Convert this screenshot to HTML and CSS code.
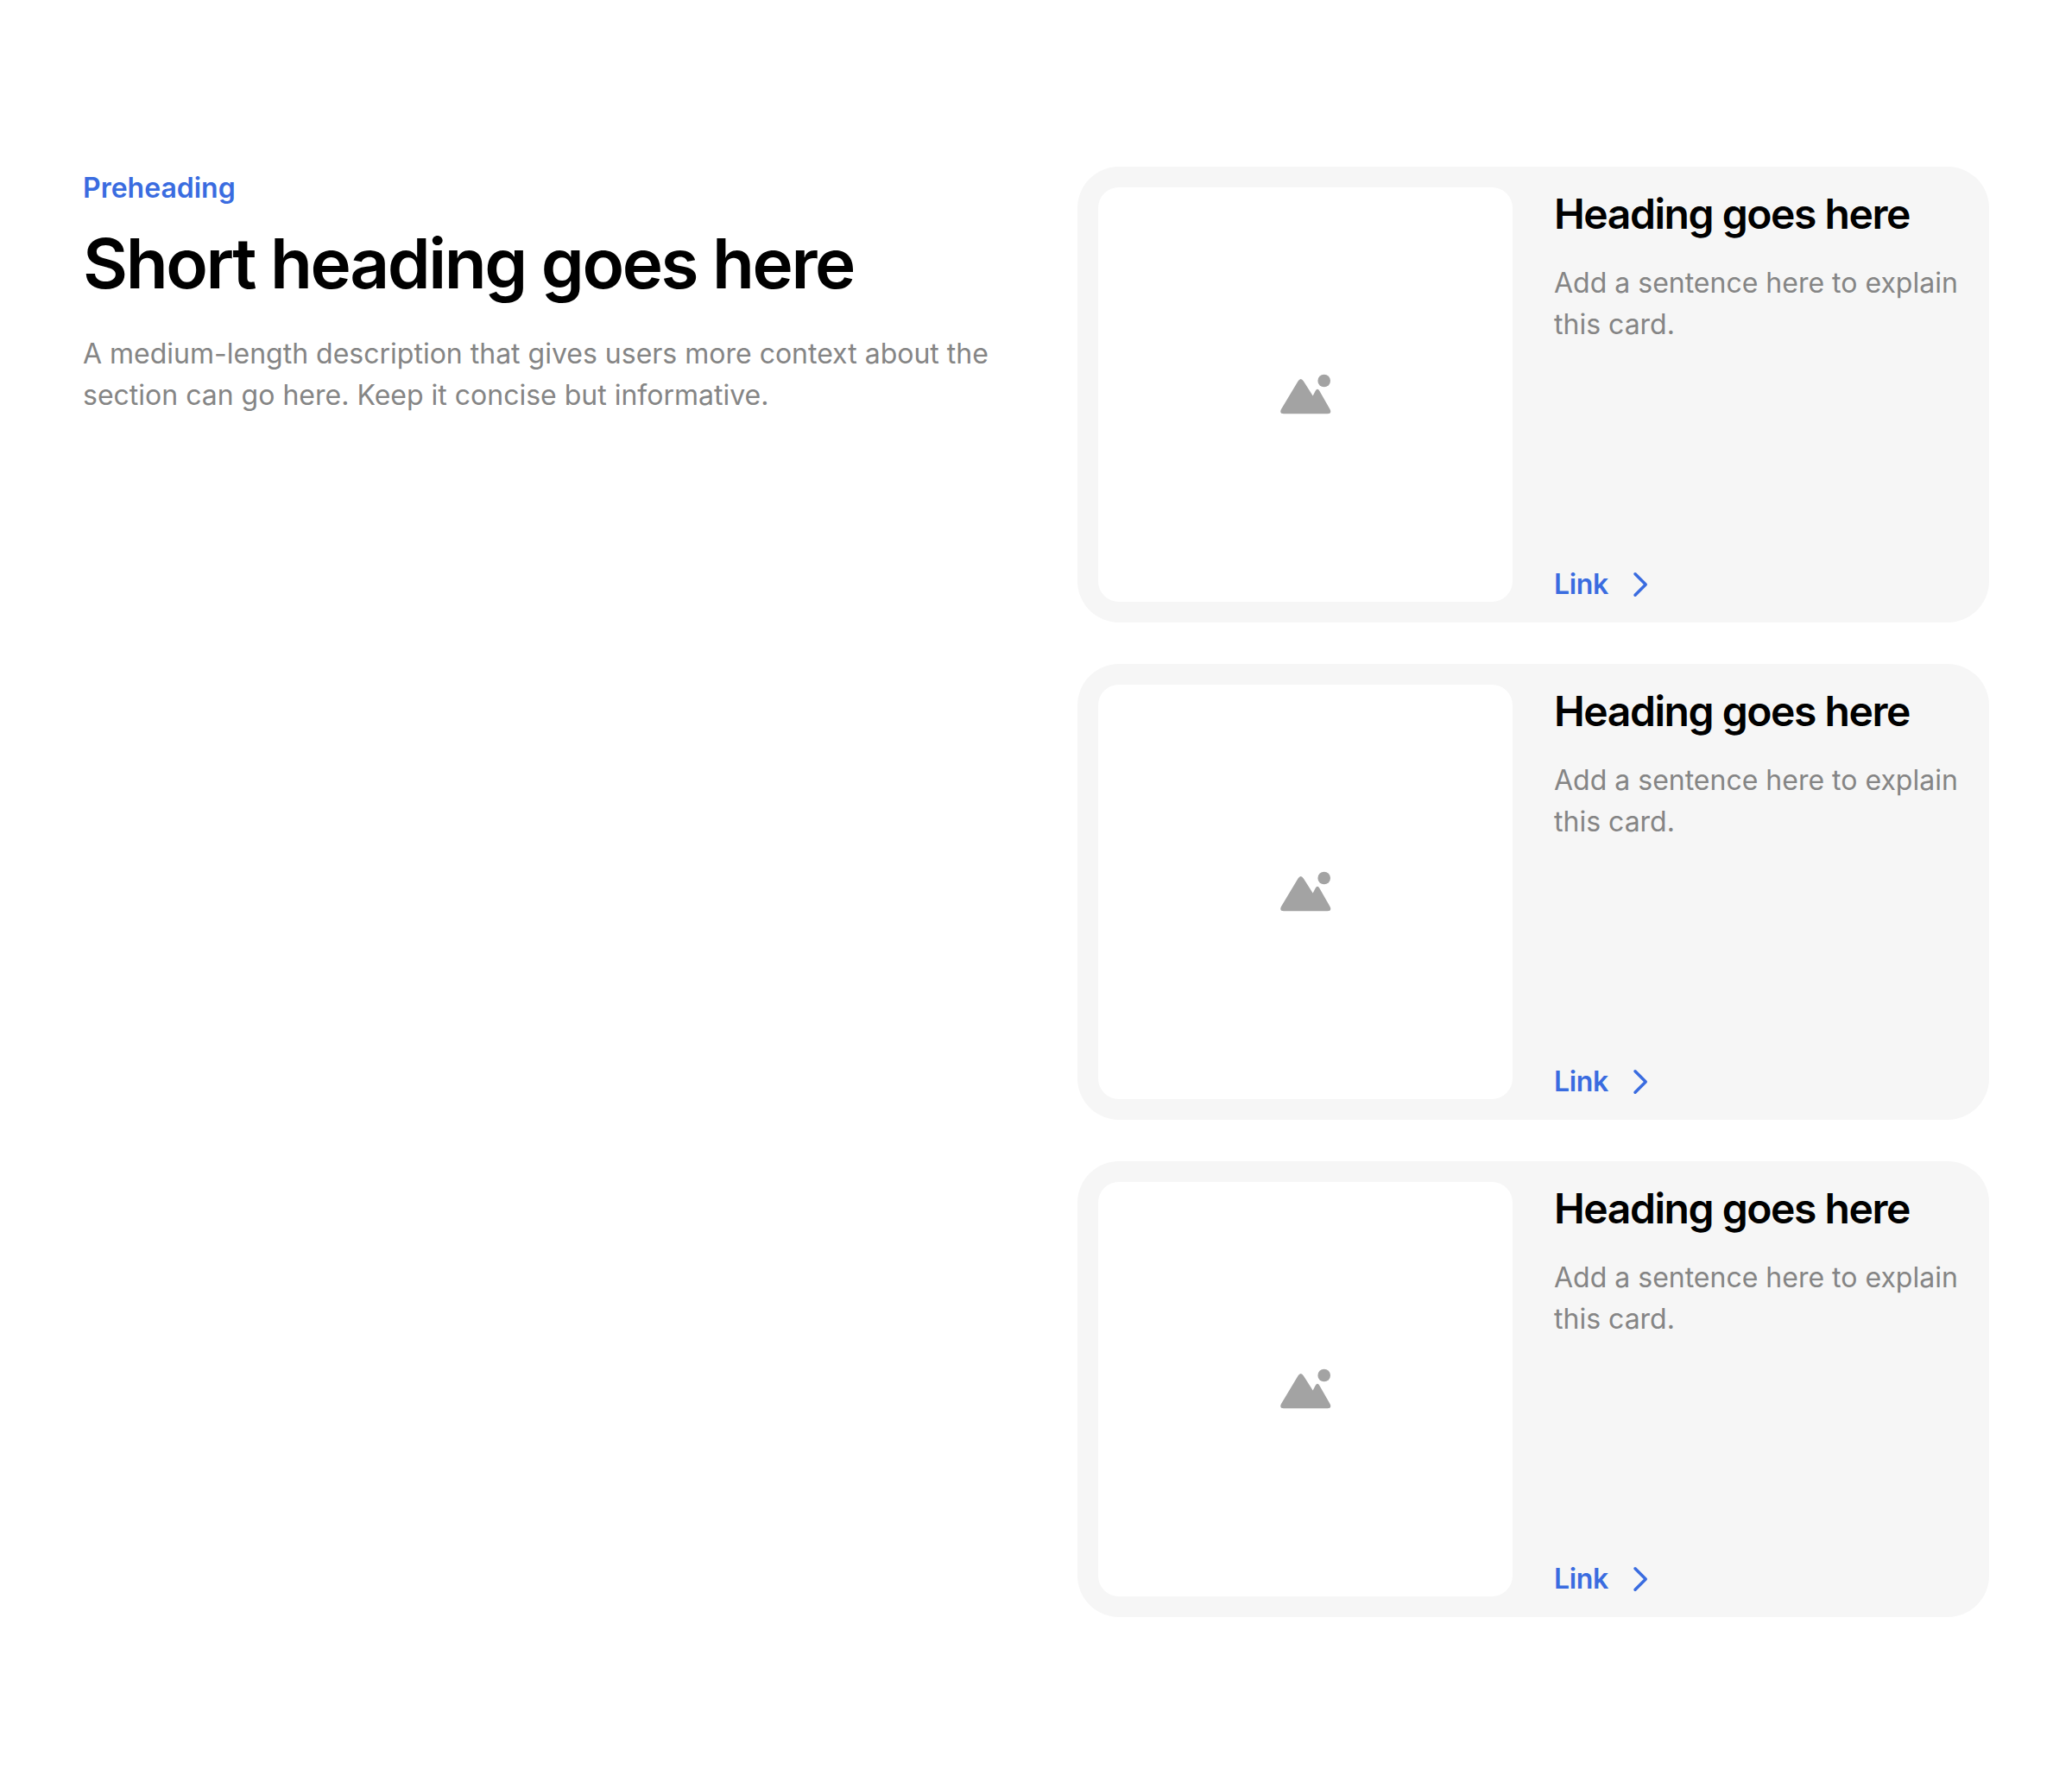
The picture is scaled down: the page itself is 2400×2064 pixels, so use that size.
FILE: index.html
```html
<!DOCTYPE html>
<html lang="en">
<head>
<meta charset="utf-8">
<title>Section</title>
<link rel="stylesheet" href="styles.css">
</head>
<body>
<main class="section">
  <header class="intro">
    <p class="pre">Preheading</p>
    <h1 class="title">Short heading goes here</h1>
    <p class="desc">A medium-length description that gives users more context about the section can go here. Keep it concise but informative.</p>
  </header>
  <div class="cards">
    <article class="card">
      <div class="thumb"><svg class="pic" viewBox="0 0 72 72"><circle cx="57.700" cy="20" r="7.300"/><path d="M27.500 20.500 Q30.700 15.500 33.900 20.500 L44.700 37.500 L47.500 32 Q50 27.500 52.500 32 L64.500 53 Q67 58.300 61.500 58.300 H11 Q5.500 58.300 8 53 Z"/></svg></div>
      <div class="body">
        <h2 class="head">Heading goes here</h2>
        <p class="text">Add a sentence here to explain this card.</p>
        <a class="link" href="#">Link<svg class="chev" viewBox="0 0 24 36"><path d="M8 5.750 L20.250 18 L8 30.250"/></svg></a>
      </div>
    </article>
    <article class="card">
      <div class="thumb"><svg class="pic" viewBox="0 0 72 72"><circle cx="57.700" cy="20" r="7.300"/><path d="M27.500 20.500 Q30.700 15.500 33.900 20.500 L44.700 37.500 L47.500 32 Q50 27.500 52.500 32 L64.500 53 Q67 58.300 61.500 58.300 H11 Q5.500 58.300 8 53 Z"/></svg></div>
      <div class="body">
        <h2 class="head">Heading goes here</h2>
        <p class="text">Add a sentence here to explain this card.</p>
        <a class="link" href="#">Link<svg class="chev" viewBox="0 0 24 36"><path d="M8 5.750 L20.250 18 L8 30.250"/></svg></a>
      </div>
    </article>
    <article class="card">
      <div class="thumb"><svg class="pic" viewBox="0 0 72 72"><circle cx="57.700" cy="20" r="7.300"/><path d="M27.500 20.500 Q30.700 15.500 33.900 20.500 L44.700 37.500 L47.500 32 Q50 27.500 52.500 32 L64.500 53 Q67 58.300 61.500 58.300 H11 Q5.500 58.300 8 53 Z"/></svg></div>
      <div class="body">
        <h2 class="head">Heading goes here</h2>
        <p class="text">Add a sentence here to explain this card.</p>
        <a class="link" href="#">Link<svg class="chev" viewBox="0 0 24 36"><path d="M8 5.750 L20.250 18 L8 30.250"/></svg></a>
      </div>
    </article>
  </div>
</main>
</body>
</html>
```

FILE: styles.css
```css
* { box-sizing: border-box; }
html, body { margin: 0; background: #fff; }
body { font-family: Inter, "Liberation Sans", sans-serif; }
.section {
  display: grid;
  grid-template-columns: 1056px 1056px;
  gap: 96px;
  padding: 193px 96px 191px;
}
.pre { margin: 0 0 15px; padding-top: 1px; font-size: 32px; line-height: 48px; font-weight: 600; color: #3a6ce0; }
.title { margin: 0 0 33px; font-size: 80px; line-height: 96px; font-weight: 600; letter-spacing: -0.03em; color: #000; }
.desc { margin: 0; font-size: 32px; line-height: 48px; color: #858585; }
.cards { display: flex; flex-direction: column; gap: 48px; }
.card { display: flex; height: 528px; padding: 24px; gap: 48px; background: #f6f6f6; border-radius: 48px; }
.thumb { flex: 0 0 480px; height: 480px; display: flex; align-items: center; justify-content: center; background: #fff; border-radius: 24px; }
.pic { width: 72px; height: 72px; fill: #a3a3a3; }
.body { flex: 1; display: flex; flex-direction: column; padding-top: 3px; }
.head { margin: 0 0 28px; font-size: 48px; line-height: 56px; font-weight: 600; letter-spacing: -0.03em; color: #000; }
.text { margin: 0; font-size: 32px; line-height: 48px; color: #858585; }
.link { margin-top: auto; margin-bottom: -4px; display: flex; align-items: center; gap: 23px; font-size: 32px; line-height: 48px; font-weight: 600; letter-spacing: -0.01em; color: #3a6ce0; text-decoration: none; }
.chev { width: 24px; height: 36px; fill: none; stroke: #3a6ce0; stroke-width: 3.500; stroke-linecap: round; stroke-linejoin: round; }
```
